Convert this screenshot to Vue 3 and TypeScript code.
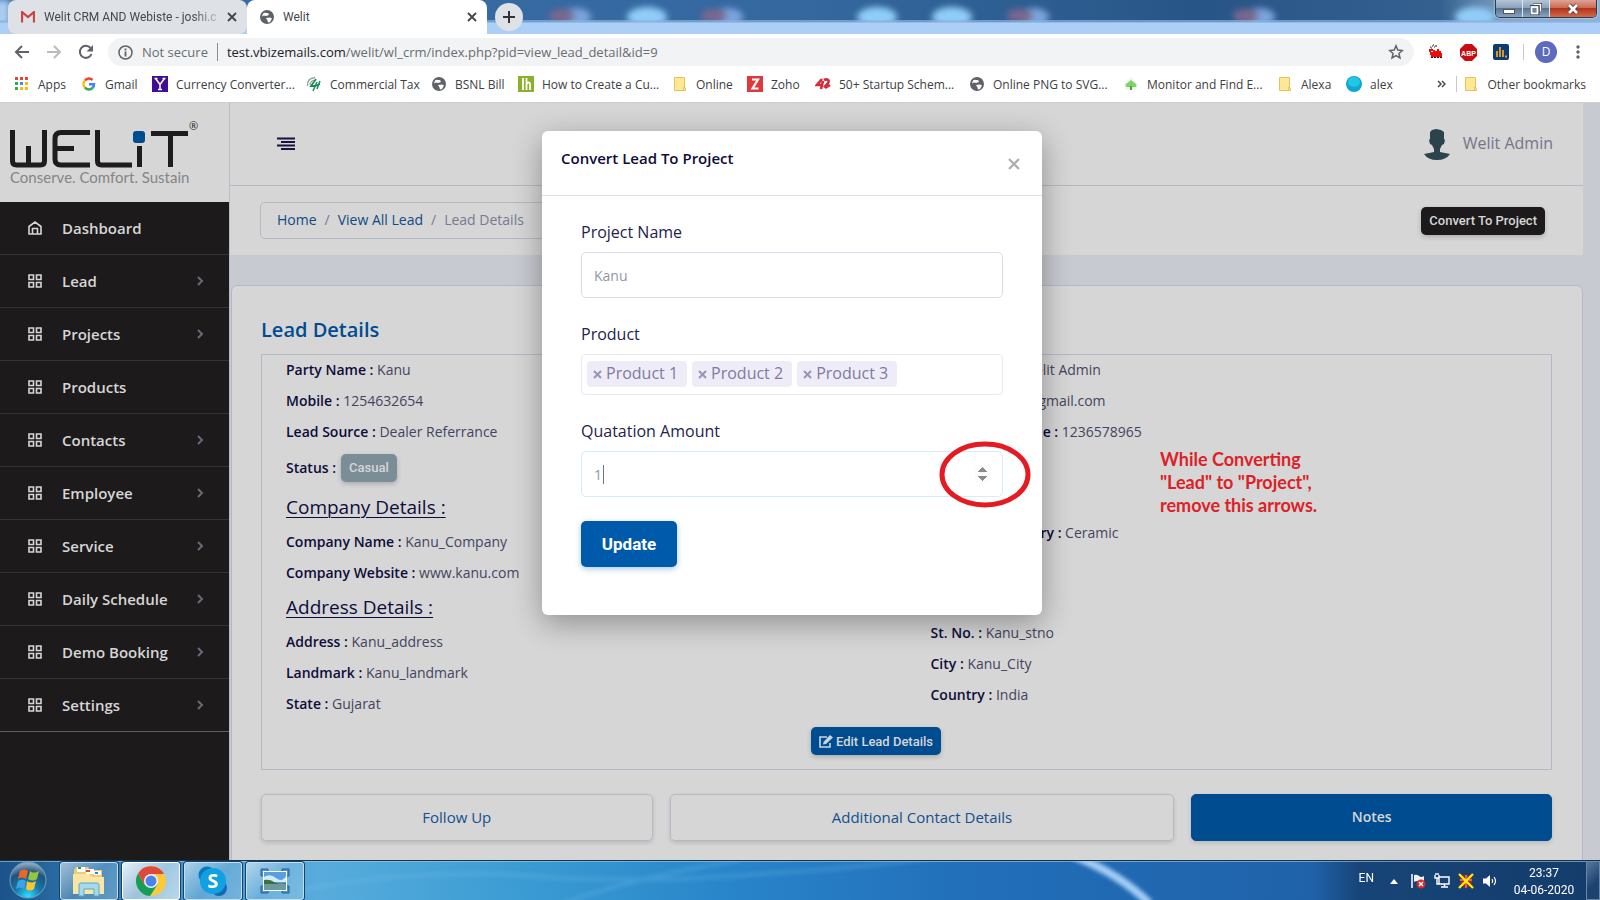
<script setup lang="ts">
import { ref } from 'vue'

interface Bookmark { icon: string; label: string; width: number }
interface Field { label: string; value: string }
interface Section { heading?: string; left: Field[]; right: Field[]; status?: string }

const bookmarks: Bookmark[] = [
  { icon: 'apps', label: 'Apps', width: 67 },
  { icon: 'google', label: 'Gmail', width: 71 },
  { icon: 'yahoo', label: 'Currency Converter...', width: 154 },
  { icon: 'tax', label: 'Commercial Tax', width: 125 },
  { icon: 'globe', label: 'BSNL Bill', width: 87 },
  { icon: 'lh', label: 'How to Create a Cu...', width: 154 },
  { icon: 'folder', label: 'Online', width: 75 },
  { icon: 'zoho', label: 'Zoho', width: 68 },
  { icon: 'fortytwo', label: '50+ Startup Schem...', width: 154 },
  { icon: 'globe', label: 'Online PNG to SVG...', width: 154 },
  { icon: 'tree', label: 'Monitor and Find E...', width: 154 },
  { icon: 'folder', label: 'Alexa', width: 69 },
  { icon: 'alex', label: 'alex', width: 60 },
]

const menu = [
  { label: 'Dashboard', icon: 'home', sub: false },
  { label: 'Lead', icon: 'grid', sub: true },
  { label: 'Projects', icon: 'grid', sub: true },
  { label: 'Products', icon: 'grid', sub: false },
  { label: 'Contacts', icon: 'grid', sub: true },
  { label: 'Employee', icon: 'grid', sub: true },
  { label: 'Service', icon: 'grid', sub: true },
  { label: 'Daily Schedule', icon: 'grid', sub: true },
  { label: 'Demo Booking', icon: 'grid', sub: true },
  { label: 'Settings', icon: 'grid', sub: true },
]

const sections: Section[] = [
  {
    left: [
      { label: 'Party Name :', value: 'Kanu' },
      { label: 'Mobile :', value: '1254632654' },
      { label: 'Lead Source :', value: 'Dealer Referrance' },
    ],
    status: 'Casual',
    right: [
      { label: 'Assigned To :', value: 'Welit Admin' },
      { label: 'Email :', value: 'welitad@gmail.com' },
      { label: 'Secondary Mobile :', value: '1236578965' },
    ],
  },
  {
    heading: 'Company Details :',
    left: [
      { label: 'Company Name :', value: 'Kanu_Company' },
      { label: 'Company Website :', value: 'www.kanu.com' },
    ],
    right: [{ label: 'Business Category :', value: 'Ceramic' }],
  },
  {
    heading: 'Address Details :',
    left: [
      { label: 'Address :', value: 'Kanu_address' },
      { label: 'Landmark :', value: 'Kanu_landmark' },
      { label: 'State :', value: 'Gujarat' },
    ],
    right: [
      { label: 'St. No. :', value: 'Kanu_stno' },
      { label: 'City :', value: 'Kanu_City' },
      { label: 'Country :', value: 'India' },
    ],
  },
]

const products = ref(['Product 1', 'Product 2', 'Product 3'])
const projectName = ref('Kanu')
const amount = ref(1)
const removeProduct = (i: number) => products.value.splice(i, 1)
const appColors = ['#ea4335', '#ea4335', '#ea4335', '#34a853', '#4285f4', '#fbbc05', '#34a853', '#fbbc05', '#fbbc05']
</script>

<template>
  <div class="desktop">
    <header class="browser">
      <div class="tabstrip">
        <svg class="aero" width="100%" height="34" aria-hidden="true">
          <defs>
            <linearGradient id="sky" x1="0" x2="1" y1="0" y2="0">
              <stop offset="0" stop-color="#3a6ca8" /><stop offset=".5" stop-color="#34689f" />
              <stop offset=".75" stop-color="#285587" /><stop offset=".9" stop-color="#33608f" />
              <stop offset=".94" stop-color="#7d9fc0" /><stop offset="1" stop-color="#8fb0d2" />
            </linearGradient>
            <filter id="soft" x="-20%" y="-60%" width="140%" height="220%"><feGaussianBlur stdDeviation="3" /></filter>
          </defs>
          <rect width="100%" height="34" fill="url(#sky)" />
          <g filter="url(#soft)">
            <rect x="-10" y="0" width="20" height="40" fill="#a9cdf0" />
            <ellipse v-for="x in [647, 877, 952, 1475]" :key="x" :cx="x" cy="17" rx="20" ry="10" fill="#8fcdf8" />
            <g v-for="x in [568, 720, 1026, 1252]" :key="x">
              <ellipse :cx="x + 8" cy="17" rx="15" ry="9" fill="#7ca4dc" />
              <ellipse :cx="x - 6" cy="16" rx="13" ry="7" fill="#79678f" />
            </g>
          </g>
          <rect y="22" width="100%" height="12" fill="#abcff6" />
          <rect y="20" width="100%" height="3" fill="#8bb3e0" opacity=".7" />
        </svg>
        <div class="tab">
          <svg width="14" height="12" viewBox="0 0 14 12"><path d="M1 11.500V1l6 5 6-5v10.500" fill="none" stroke="#c9463c" stroke-width="2.200" /></svg>
          <span class="tab-title fade">Welit CRM AND Webiste - joshi.c</span>
          <button class="x" aria-label="Close tab"><svg width="10" height="10" viewBox="0 0 10 10"><path d="M1 1l8 8M9 1l-8 8" stroke="#444" stroke-width="1.800" /></svg></button>
        </div>
        <div class="tab active">
          <svg width="14" height="14" viewBox="0 0 14 14"><circle cx="7" cy="7" r="7" fill="#5f6368" /><path d="M3 3.500c2-1.500 3 0 5-.5l1 2-3 1-2-.5-2 1zM6 8l4-.5 2 1-2 3.500-2 .5-.5-2z" fill="#fff" /></svg>
          <span class="tab-title">Welit</span>
          <button class="x" aria-label="Close tab"><svg width="10" height="10" viewBox="0 0 10 10"><path d="M1 1l8 8M9 1l-8 8" stroke="#444" stroke-width="1.800" /></svg></button>
        </div>
        <button class="newtab" aria-label="New tab"><svg width="14" height="14" viewBox="0 0 14 14"><path d="M7 1v12M1 7h12" stroke="#333" stroke-width="2" /></svg></button>
        <div class="winbtns">
          <button aria-label="Minimize"><svg width="12" height="12" viewBox="0 0 12 12"><rect x=".5" y="6.500" width="11" height="4" fill="#fff" stroke="#555" /></svg></button>
          <button aria-label="Restore"><svg width="12" height="12" viewBox="0 0 12 12"><path d="M3.500 1h7.500v7.500" fill="none" stroke="#444" stroke-width="3" /><path d="M3.500 1.500h7v7" fill="none" stroke="#fff" stroke-width="1.500" /><rect x="1" y="3.500" width="7" height="7.500" fill="none" stroke="#444" stroke-width="3" /><rect x="1.500" y="4" width="6" height="6.500" fill="#6c87a5" stroke="#fff" stroke-width="1.800" /></svg></button>
          <button class="close" aria-label="Close"><svg width="14" height="12" viewBox="0 0 14 12"><path d="M3 2l8 8M11 2l-8 8" stroke="#533" stroke-width="4.500" /><path d="M3 2l8 8M11 2l-8 8" stroke="#fff" stroke-width="2.800" /></svg></button>
        </div>
      </div>

      <div class="toolbar">
        <button class="nav" aria-label="Back"><svg width="16" height="16" viewBox="0 0 16 16"><path d="M15 8H2M8 2L2 8l6 6" fill="none" stroke="#5f6368" stroke-width="2" /></svg></button>
        <button class="nav" aria-label="Forward"><svg width="16" height="16" viewBox="0 0 16 16"><path d="M1 8h13M8 2l6 6-6 6" fill="none" stroke="#b9bbbd" stroke-width="2" /></svg></button>
        <button class="nav" aria-label="Reload"><svg width="16" height="16" viewBox="0 0 16 16"><path d="M13.500 10A6 6 0 1 1 12.500 4" fill="none" stroke="#5f6368" stroke-width="2" /><path d="M15 1v6.500H8.500z" fill="#5f6368" /></svg></button>
        <div class="omnibox">
          <svg width="15" height="15" viewBox="0 0 15 15"><circle cx="7.500" cy="7.500" r="6.500" fill="none" stroke="#5f6368" stroke-width="1.500" /><path d="M7.500 6.500v5M7.500 3.500v2" stroke="#5f6368" stroke-width="1.800" /></svg>
          <span class="secure">Not secure</span>
          <span class="url"><b>test.vbizemails.com</b>/welit/wl_crm/index.php?pid=view_lead_detail&amp;id=9</span>
          <svg width="16" height="16" viewBox="0 0 16 16"><path d="M8 1.800l1.800 4.300 4.600.4-3.500 3 1.100 4.500-4-2.400L4 14l1.100-4.500-3.500-3 4.600-.4z" fill="none" stroke="#5f6368" stroke-width="1.500" /></svg>
        </div>
        <div class="extensions">
          <svg width="16" height="16" viewBox="0 0 16 16"><path d="M1 5h4v1h2v1h2V5h2v2h2v2h1v4H3v-2H2V8H1z" fill="#f00c0c" /><path d="M3 13.500h12" stroke="#111" stroke-dasharray="2 1" /><path d="M2 3h1M4 2h1M6 3h1M7 2h2M3 4h1M5 1h1" stroke="#111" /><path d="M3 7h2v1H3z" fill="#fff" /></svg>
          <svg width="17" height="17" viewBox="0 0 17 17"><path d="M5 0h7l5 5v7l-5 5H5l-5-5V5z" fill="#c70d0d" /><text x="8.500" y="11.500" text-anchor="middle" class="abp">ABP</text></svg>
          <svg width="16" height="16" viewBox="0 0 16 16"><rect width="16" height="16" rx="2" fill="#0b3d74" /><path d="M4 13V7M7 13V3M10 13V6M12 12.500h2" stroke="#f0a020" stroke-width="1.800" /></svg>
          <i class="sep"></i>
          <span class="avatar">D</span>
          <svg width="4" height="16" viewBox="0 0 4 16" fill="#5f6368"><circle cx="2" cy="3" r="1.700" /><circle cx="2" cy="8" r="1.700" /><circle cx="2" cy="13" r="1.700" /></svg>
        </div>
      </div>

      <nav class="bookmarks" aria-label="Bookmarks">
        <a v-for="b in bookmarks" :key="b.label" href="#" class="bookmark" :style="{ width: b.width + 'px' }">
          <svg width="16" height="16" viewBox="0 0 16 16">
            <template v-if="b.icon === 'apps'"><rect v-for="(c, i) in appColors" :key="i" :x="1 + (i % 3) * 5" :y="1 + Math.floor(i / 3) * 5" width="3" height="3" :fill="c" /></template>
            <g v-else-if="b.icon === 'google'" fill="none" stroke-width="2.500"><path d="M4 4.500A5 5 0 0 1 11.500 4" stroke="#ea4335" /><path d="M4 4.500a5 5 0 0 0 0 7" stroke="#fbbc05" /><path d="M4 11.500a5 5 0 0 0 7.500.5" stroke="#34a853" /><path d="M8 8.200h5c0 1.500-.5 2.800-1.500 3.800" stroke="#4285f4" /></g>
            <g v-else-if="b.icon === 'yahoo'"><rect width="16" height="16" fill="#400c93" /><path d="M3.500 2.500L8 8.500l4.500-6M8 8v6M2.500 2.500h3M10.500 2.500h3M6 13.500h4" fill="none" stroke="#fff" stroke-width="1.500" /></g>
            <g v-else-if="b.icon === 'tax'" fill="none"><path d="M1.500 10C1 5 4 2 9 1.500M4 9c0-2.500 1.500-4 4-5" stroke="#8fa5a0" stroke-width="1.300" /><path d="M10 3L5 10h4l5-2" stroke="#17914c" stroke-width="1.800" /><path d="M11 6L7 15M14 5l-3 8" stroke="#1d8a63" stroke-width="1.500" /></g>
            <g v-else-if="b.icon === 'globe'"><circle cx="8" cy="8" r="7" fill="#5f6368" /><path d="M4 4.500c2-1.500 3 0 5-.5l1 2-3 1-2-.5-2 1zM7 9l4-.5 2 1-2 3.500-2 .5-.5-2z" fill="#fff" /></g>
            <g v-else-if="b.icon === 'lh'"><rect width="16" height="16" fill="#8cb02d" /><path d="M5 2v12M8.500 2v12M8.500 8c1-2 3.500-2 3.500 0v6" fill="none" stroke="#fff" stroke-width="1.800" /></g>
            <g v-else-if="b.icon === 'folder'"><path d="M2.500 1.500h10v10.500l1 .5v2h-11z" fill="#ffe793" stroke="#e3c35c" /><path d="M11.500 11v3.500" stroke="#e3c35c" /></g>
            <g v-else-if="b.icon === 'zoho'"><rect width="16" height="16" fill="#e0393b" /><path d="M5 3.500h6L5.500 12.500H11.500" fill="none" stroke="#fff" stroke-width="2.200" /></g>
            <g v-else-if="b.icon === 'fortytwo'" fill="none" stroke="#d8283a" stroke-width="2.600"><path d="M7 3L2 9h6M8 5l-2 8" /><path d="M9 4c3-1.500 6 0 4 3L9 11.500M10 12l5-3" /></g>
            <g v-else-if="b.icon === 'tree'"><path d="M8 1l7 7-2 6H3L1 8z" fill="#eef5ec" /><path d="M8 4l3 2.500q3.500 2 2 4.500H3q-1.500-2.500 2-4.500z" fill="#7cd46a" /><path d="M8 10v4" stroke="#52954c" stroke-width="2" /></g>
            <g v-else><circle cx="8" cy="8" r="8" fill="#13a5d4" /><ellipse cx="8" cy="6" rx="6" ry="5" fill="#20c8e6" /></g>
          </svg>
          <span>{{ b.label }}</span>
        </a>
        <span class="more"><svg width="9" height="8" viewBox="0 0 9 8"><path d="M1 1l3 3-3 3M5 1l3 3-3 3" fill="none" stroke="#4a4d51" stroke-width="1.500" /></svg></span>
        <i class="sep"></i>
        <a href="#" class="bookmark">
          <svg width="16" height="16" viewBox="0 0 16 16"><path d="M2.500 1.500h10v10.500l1 .5v2h-11z" fill="#ffe793" stroke="#e3c35c" /><path d="M11.500 11v3.500" stroke="#e3c35c" /></svg>
          <span>Other bookmarks</span>
        </a>
      </nav>
    </header>

    <main class="page">
      <aside class="sidebar">
        <svg class="logo" width="229" height="99" viewBox="0 0 229 99" role="img" aria-label="Welit">
          <g fill="none" stroke="#1f1c1d" stroke-width="5">
            <path d="M12.500 27v31q0 4 4 4h24q4 0 4-4V27M28.500 43v19" />
            <path d="M90 29.500H61q-6 0-6 6V56q0 6 6 6h29M55 45.500h19" />
            <path d="M97.500 27v31q0 4 4 4H132M139.500 43v21M151 30.500h37M170.500 31v33" />
          </g>
          <rect x="133" y="28" width="12" height="12" rx="3" fill="#004c90" />
          <text x="189" y="27" class="reg">®</text>
          <text x="10" y="80" class="tagline">Conserve. Comfort. Sustain</text>
        </svg>
        <nav class="menu">
          <a v-for="m in menu" :key="m.label" href="#">
            <svg width="14" height="14" viewBox="0 0 14 14" fill="none" stroke="#d6d6d6" stroke-width="1.600">
              <path v-if="m.icon === 'home'" d="M1 5.500L7 1l6 4.500V13H1zM4.500 13V7.500h5V13" />
              <path v-else d="M1 1h4.500v4.500H1zM8.500 1H13v4.500H8.500zM1 8.500h4.500V13H1zM8.500 8.500H13V13H8.500z" />
            </svg>
            <span>{{ m.label }}</span>
            <svg v-if="m.sub" width="7" height="10" viewBox="0 0 7 10"><path d="M1 1l4 4-4 4" fill="none" stroke="#686a76" stroke-width="2" /></svg>
          </a>
        </nav>
      </aside>

      <div class="content">
        <div class="topbar">
          <button class="burger" aria-label="Toggle menu"><svg width="18" height="14" viewBox="0 0 18 14"><path d="M0 1.500h18M4 5h14M0 8.500h18M4 12h14" stroke="#15153d" stroke-width="2" /></svg></button>
          <div class="user">
            <svg width="26" height="31" viewBox="0 0 26 31"><path d="M6 3l2-2 4-1 5 1 3 2v7l1 1-1 4-2 1-2 4v3l5 1 5 1q-4 6-13 6T0 25l5-1 5-1v-3l-2-4-2-1-1-4 1-1z" fill="#2c434b" /></svg>
            <span>Welit Admin</span>
          </div>
        </div>
        <div class="crumbbar">
          <nav class="crumbs" aria-label="Breadcrumb">
            <a href="#">Home</a><i>/</i><a href="#">View All Lead</a><i>/</i><span>Lead Details</span>
          </nav>
          <button class="btn dark">Convert To Project</button>
        </div>

        <section class="card">
          <h2>Lead Details</h2>
          <div class="details">
            <div v-for="(s, i) in sections" :key="i" class="section" :class="{ headed: s.heading }">
              <div>
                <h3 v-if="s.heading">{{ s.heading }}</h3>
                <p v-for="f in s.left" :key="f.label"><b>{{ f.label }}</b> {{ f.value }}</p>
                <div v-if="s.status" class="status"><b>Status :</b><button class="btn grey">{{ s.status }}</button></div>
              </div>
              <div class="right">
                <p v-for="f in s.right" :key="f.label"><b>{{ f.label }}</b> {{ f.value }}</p>
              </div>
            </div>
            <div class="actions">
              <button class="btn blue">
                <svg width="14" height="13" viewBox="0 0 14 13"><path d="M8 2H1v10h10V8" fill="none" stroke="#c9d6e2" stroke-width="1.600" /><path d="M4 9.500L4.500 7l6.500-7 3 2.500L7 9z" fill="#c9d6e2" /></svg>
                Edit Lead Details
              </button>
            </div>
          </div>
          <div class="tabs">
            <button>Follow Up</button>
            <button>Additional Contact Details</button>
            <button class="on">Notes</button>
          </div>
        </section>
      </div>

      <div class="overlay">
        <form class="modal" role="dialog" aria-label="Convert Lead To Project" @submit.prevent>
          <header>
            <h1>Convert Lead To Project</h1>
            <button type="button" class="dismiss" aria-label="Close"><svg width="12" height="12" viewBox="0 0 12 12"><path d="M1 1l10 10M11 1L1 11" stroke="#b0b0b0" stroke-width="2.400" /></svg></button>
          </header>
          <div class="fields">
            <label for="pname">Project Name</label>
            <input id="pname" v-model="projectName" type="text" />
            <span id="plabel" class="label">Product</span>
            <div class="tags" role="group" aria-labelledby="plabel">
              <span v-for="(p, i) in products" :key="p" class="tag">
                <button type="button" :aria-label="'Remove ' + p" @click="removeProduct(i)"><svg width="9" height="9" viewBox="0 0 9 9"><path d="M1 1l7 7M8 1L1 8" stroke="#9a94b8" stroke-width="2" /></svg></button>{{ p }}
              </span>
            </div>
            <label for="amount">Quatation Amount</label>
            <div class="amount">
              <input id="amount" v-model="amount" type="number" />
              <i class="caret"></i>
              <svg class="ring" width="92" height="67" viewBox="0 0 92 67"><ellipse cx="46" cy="33.500" rx="43" ry="30.500" fill="none" stroke="#e41b23" stroke-width="5" /></svg>
            </div>
            <button class="update">Update</button>
          </div>
        </form>
      </div>
      <p class="note">While Converting<br />"Lead" to "Project",<br />remove this arrows.</p>
    </main>

    <footer class="taskbar">
      <svg class="wave" width="100%" height="40" viewBox="0 0 1600 40" preserveAspectRatio="none" aria-hidden="true">
        <defs>
          <linearGradient id="bar" x1="0" x2="1" y1="0" y2="0">
            <stop offset="0" stop-color="#1b5289" /><stop offset=".05" stop-color="#2c74ab" /><stop offset=".11" stop-color="#4293c9" />
            <stop offset=".2" stop-color="#57acdc" /><stop offset=".33" stop-color="#3a9bd3" /><stop offset=".45" stop-color="#2986ca" />
            <stop offset=".6" stop-color="#226fba" /><stop offset=".82" stop-color="#1f62a9" /><stop offset=".85" stop-color="#174477" />
            <stop offset="1" stop-color="#143c6b" />
          </linearGradient>
          <filter id="glow" x="-20%" y="-20%" width="140%" height="140%"><feGaussianBlur stdDeviation="2" /></filter>
        </defs>
        <rect width="1600" height="40" fill="url(#bar)" />
        <g fill="none" filter="url(#glow)">
          <path d="M300 30Q420 8 530 16T760 14Q860 8 930 -2M560 44Q640 16 740 0" stroke="#7cc2ea" stroke-width="4" opacity=".25" />
          <path d="M1074 -4Q1120 14 1150 44" stroke="#a4cff8" stroke-width="8" />
        </g>
        <path d="M0 .5h1600" stroke="#17324d" /><path d="M0 1.500h1600" stroke="#a5cde0" opacity=".6" />
      </svg>
      <button class="start" aria-label="Start">
        <svg width="38" height="38" viewBox="0 0 38 38">
          <defs><radialGradient id="orb" cx=".5" cy=".95" r=".9"><stop offset="0" stop-color="#2fe0ff" /><stop offset=".4" stop-color="#1679ad" /><stop offset=".75" stop-color="#21527c" /><stop offset="1" stop-color="#8ba6bb" /></radialGradient></defs>
          <circle cx="19" cy="19" r="18" fill="url(#orb)" stroke="#6fa3c8" />
          <path d="M11 10q4-3 8 0l-2 8q-4-3-8 0z" fill="#ee6626" /><path d="M21 10q4 3 9 0l-2 8q-4 3-9 0z" fill="#93c742" />
          <path d="M9 20q4-3 8 0l-2 8q-4-3-8 0z" fill="#39a5e8" /><path d="M18 20q4 3 9 0l-2 8q-4 3-8 0z" fill="#fcc72c" />
        </svg>
      </button>
      <button class="task" aria-label="Explorer">
        <svg width="34" height="32" viewBox="0 0 34 32"><path d="M2 5l2-3h12l2 3h12v24H2z" fill="#e9cd7a" /><path d="M5 2h8v5H5zM14 4h8v5h-8zM22 6h7v4h-7z" fill="#fff" /><path d="M6 2h3v2H6z" fill="#2ca52c" /><path d="M14 5h4v2h-4z" fill="#d0532c" /><path d="M23 7h3v2h-3z" fill="#2987cc" /><path d="M1 9h16l3 3h12v17H1z" fill="#f8e6a2" /><path d="M7 31V20q0-2 2-2h16q2 0 2 2v11h-5v-7H12v7z" fill="#a5d9ee" stroke="#5fa5c4" /></svg>
      </button>
      <button class="task lit" aria-label="Chrome">
        <svg width="30" height="30" viewBox="0 0 30 30"><circle cx="15" cy="15" r="15" fill="#fbc93a" /><path d="M2 7.500A15 15 0 0 0 14 30l7.500-11.500L15 15l-6.500 3.500z" fill="#189d58" /><path d="M2 7.500L8.500 18.500 15 8h13A15 15 0 0 0 2 7.500z" fill="#db4a3c" /><circle cx="15" cy="15" r="7" fill="#f4f4f4" /><circle cx="15" cy="15" r="5.500" fill="#4a83ee" /></svg>
      </button>
      <button class="task" aria-label="Skype">
        <svg width="30" height="30" viewBox="0 0 30 30"><circle cx="9" cy="9" r="8.500" fill="#0a78c0" /><circle cx="21" cy="22" r="8" fill="#1468b4" /><circle cx="15" cy="15" r="13" fill="#11a0e0" /><text x="15" y="22" text-anchor="middle" class="skype">S</text></svg>
      </button>
      <button class="task" aria-label="Picture viewer">
        <svg width="30" height="26" viewBox="0 0 30 26"><path d="M1 1h7v7H1zM22 1h7v7h-7zM1 18h7v7H1zM22 18h7v7h-7z" fill="#4d8fcb" stroke="#255f9d" /><rect x="3" y="3" width="24" height="20" fill="#fff" /><rect x="4" y="4" width="22" height="18" fill="#5b9ee0" /><path d="M4 9q6-4 12 1t10-2v6H4z" fill="#d5eaf7" /><path d="M4 12q6-1 10 2t12 1v2H4z" fill="#3b713f" /><path d="M4 16h22v6H4z" fill="#6d9a9c" /></svg>
      </button>
      <div class="tray">
        <span class="lang">EN</span>
        <svg class="expand" width="8" height="5" viewBox="0 0 8 5"><path d="M0 5l4-5 4 5z" fill="#fff" /></svg>
        <svg width="16" height="16" viewBox="0 0 16 16"><path d="M2 1v14" stroke="#fff" stroke-width="1.500" /><path d="M4 2q3-1 5 1t5 0v6q-3 2-5 0T4 9z" fill="#eef1f5" /><circle cx="11" cy="11" r="4.500" fill="#d52b2b" /><path d="M9 9l4 4M13 9l-4 4" stroke="#fff" stroke-width="1.300" /></svg>
        <svg width="16" height="16" viewBox="0 0 16 16" fill="none" stroke="#fff" stroke-width="1.400"><path d="M5 4h10v7H5zM7 14h7M10.500 11v3M1 2v3h4V2M3 5v6h2M2 0v2M4 0v2" /></svg>
        <svg width="16" height="16" viewBox="0 0 16 16"><path d="M2 2h12v8q-2 4-6 5-4-1-6-5z" fill="#a52224" /><path d="M8 2v13M2 7h12" stroke="#d9b9b9" /><path d="M1 1l14 14M15 1L1 15" stroke="#ffee00" stroke-width="2.300" /></svg>
        <svg width="16" height="16" viewBox="0 0 16 16"><path d="M1 5.500h3L8 2v12L4 10.500H1z" fill="#fff" /><path d="M10 6q1.500 2 0 4M12 4q3 4 0 8" fill="none" stroke="#fff" stroke-width="1.200" /></svg>
        <div class="clock"><span>23:37</span><span>04-06-2020</span></div>
        <button class="peek" aria-label="Show desktop"></button>
      </div>
    </footer>
  </div>
</template>

<style>
html, body { margin: 0; overflow: hidden; }
</style>

<style scoped>
* { box-sizing: border-box; }
button { font: inherit; border: 0; background: none; padding: 0; color: inherit; display: flex; align-items: center; justify-content: center; }
a { color: inherit; text-decoration: none; }
h1, h2, h3, p { margin: 0; }
svg { flex: none; display: block; }
.desktop { height: 100vh; display: flex; flex-direction: column; font-family: "Open Sans", "Noto Sans", sans-serif; overflow: hidden; }

.browser { flex: none; background: #fff; border-bottom: 1px solid #cfcfd0; }
.tabstrip { position: relative; height: 34px; display: flex; padding-left: 8px; font: 12px Roboto, sans-serif; color: #45484c; }
.aero { position: absolute; inset: 0; }
.tab { position: relative; width: 239px; display: flex; align-items: center; gap: 9px; padding: 0 10px 0 13px; background: #dee1e6; border-radius: 8px; }
.tab.active { width: 240px; background: #fff; border-radius: 8px 8px 0 0; }
.tab-title { flex: 1; white-space: nowrap; overflow: hidden; }
.fade { mask-image: linear-gradient(90deg, #000 85%, #0003); }
.newtab { position: relative; width: 28px; height: 28px; margin: 3px 0 0 8px; border-radius: 50%; background: #dee1e6; }
.winbtns { position: relative; margin: 0 3px 0 auto; height: 18px; display: flex; border: 1px solid #263c55; border-top: 0; border-radius: 0 0 5px 5px; overflow: hidden; box-shadow: 0 0 2px #fff; }
.winbtns button { width: 27px; background: linear-gradient(#b4c6d8, #8ba2ba 45%, #5a7593 50%, #8aa4c0); border-right: 1px solid #dbe5ee; }
.winbtns .close { width: 46px; border: 0; background: linear-gradient(#dda394, #cb6c55 45%, #b3331d 50%, #d36a4a); }

.toolbar { height: 36px; display: flex; align-items: center; padding: 0 20px 0 14px; }
.nav { width: 16px; margin-right: 16px; }
.omnibox { flex: 1; height: 28px; margin-left: -2px; border-radius: 14px; background: #f1f3f4; display: flex; align-items: center; padding: 0 10px; font-size: 13px; color: #6a6d71; }
.secure { margin: 0 9px; padding-right: 9px; line-height: 18px; border-right: 1px solid #8a8d91; white-space: nowrap; }
.url { flex: 1; white-space: nowrap; overflow: hidden; }
.url b { font-weight: 400; color: #202124; }
.extensions { display: flex; align-items: center; gap: 16px; padding-left: 14px; }
.sep { width: 1px; height: 16px; background: #c6c8cb; }
.extensions .sep { margin: 0 -5px 0 -2px; }
.avatar { width: 22px; height: 22px; border-radius: 50%; background: #5c6bc0; color: #fff; font-size: 12px; line-height: 22px; text-align: center; }
.extensions .avatar + svg { margin-left: 3px; }
.abp { font: bold 7px "Liberation Sans", sans-serif; fill: #fff; }

.bookmarks { height: 32px; padding: 0 14px 4px; display: flex; align-items: center; font-size: 12px; color: #3c4043; }
.bookmark { flex: none; display: flex; align-items: center; gap: 8px; white-space: nowrap; }
.more { margin: 0 10px 0 auto; }
.bookmarks .sep { margin-right: 6px; }

.page { flex: 1; min-height: 0; position: relative; display: flex; background: #c8cad1; overflow: hidden; }
.sidebar { width: 229px; flex: none; background: #1c1a1b; }
.logo { background: #d6d6d6; }
.reg { font-size: 11px; fill: #1f1c1d; }
.tagline { font: 15px Lato, sans-serif; fill: #858585; }
.menu a { height: 53px; display: flex; align-items: center; padding: 0 25px 0 28px; border-bottom: 1px solid #353435; color: #d6d6d6; font-size: 15px; font-weight: 600; }
.menu a:last-child { border-color: #606060; }
.menu span { flex: 1; margin-left: 20px; }

.content { flex: 1; min-width: 0; margin-right: 17px; border-left: 1px solid #b9bcc7; color: #0d0d3a; }
.topbar, .crumbbar { display: flex; align-items: center; justify-content: space-between; background: #d6d6d6; }
.topbar { height: 83px; padding: 0 30px 0 47px; border-bottom: 1px solid #b5b9c6; }
.user { display: flex; align-items: center; gap: 13px; color: #74748a; font-size: 16px; line-height: 20px; }
.user span { padding-bottom: 2px; }
.crumbbar { height: 69px; padding: 0 38px 0 30px; }
.crumbs { width: 320px; height: 37px; display: flex; align-items: center; gap: 8px; padding: 0 16px 3px; border: 1px solid #b5b9c6; border-radius: 5px; font-size: 14px; color: #0f4a82; white-space: nowrap; }
.crumbs i, .crumbs span { font-style: normal; color: #777a90; }
.btn { height: 28px; padding: 0 8px; border-radius: 5px; font: 500 13px Roboto, sans-serif; box-shadow: 0 2px 5px #0003; color: #d6d6d6; }
.dark { background: #1c1a1b; }
.grey { background: #7b8d96; }
.blue { background: #004c90; gap: 3px; }

.card { margin: 30px 0 0 1px; height: 700px; padding: 29px 30px 0 29px; background: #d6d6d6; border: 1px solid #b5b9c6; border-radius: 6px; }
h2 { font-size: 20px; line-height: 30px; font-weight: 600; color: #004c90; }
.details { margin-top: 9px; border: 1px solid #b5b9c6; padding-bottom: 14px; }
.section { display: grid; grid-template-columns: 1fr 1fr; }
.section > div { padding-left: 24px; }
.section:first-child { margin-top: -1px; }
.headed .right { padding-top: 29px; }
.section p { font-size: 14px; line-height: 31px; color: #44445f; white-space: nowrap; }
.section b { font-weight: 600; color: #0d0d3a; }
.status { display: flex; height: 41px; align-items: center; gap: 5px; font-size: 14px; }
h3 { font-size: 19px; line-height: 38px; font-weight: 500; text-decoration: underline; text-underline-offset: 3px; text-decoration-thickness: 1px; }
.actions { display: flex; justify-content: center; padding: 8px 61px 0 0; }
.tabs { display: grid; grid-template-columns: 391fr 504fr 360fr; gap: 17px; margin-top: 24px; }
.tabs button { height: 47px; border: 1px solid #b5b9c6; border-radius: 5px; color: #14508c; font-size: 15px; padding-bottom: 2px; box-shadow: 0 2px 4px #0002; }
.tabs .on { background: #004c90; border-color: #004c90; color: #d6d6d6; font-size: 14px; font-weight: 600; }

.overlay { position: absolute; inset: 0 16px 0 0; display: flex; justify-content: center; align-items: flex-start; padding-top: 28px; }
.modal { width: 500px; background: #fff; border-radius: 6px; box-shadow: 0 8px 30px #0005; color: #23234b; }
.modal header { display: flex; justify-content: space-between; height: 65px; padding: 17px 22px 0 19px; border-bottom: 1px solid #dcdce8; }
h1 { font-size: 15px; line-height: 20px; font-weight: 600; color: #0d0d3a; }
.dismiss { height: 32px; }
.fields { padding: 24px 39px 48px; display: flex; flex-direction: column; }
.fields label, .label { font-size: 16px; line-height: 24px; margin-bottom: 8px; }
.fields input { width: 100%; height: 46px; margin: 0 0 24px; padding: 0 12px; border: 1px solid #dadbe8; border-radius: 5px; background: #fff; font: 14px "Open Sans", sans-serif; color: #8e98aa; outline: 0; }
.tags { height: 41px; margin-bottom: 24px; padding: 6px 5px; display: flex; align-items: flex-start; gap: 5px; border: 1px solid #e9e9f3; border-radius: 4px; }
.tag { height: 26px; padding: 0 9px 2px 6px; display: flex; align-items: center; gap: 4px; border-radius: 4px; background: #eeecf7; color: #7e7aa5; font-size: 16px; white-space: nowrap; }
.tag button { padding-top: 3px; }
.amount { position: relative; }
.amount input { border-color: #d3eef5; display: block; }
.amount input::-webkit-inner-spin-button { opacity: 1; }
.caret { position: absolute; left: 22px; top: 14px; width: 1px; height: 19px; background: #6d7489; }
.ring { position: absolute; right: -28px; top: -10px; }
.update { width: 96px; height: 46px; border-radius: 5px; background: #005aab; color: #fff; font: bold 17px Roboto, sans-serif; box-shadow: 0 2px 6px #a9cbe8; }
.note { position: absolute; left: 1160px; top: 345px; font: bold 18px/23px Lato, sans-serif; color: #dc2228; white-space: nowrap; }

.taskbar { position: relative; height: 40px; flex: none; display: flex; align-items: center; gap: 4px; color: #fff; }
.wave { position: absolute; inset: 0; }
.start { position: relative; width: 56px; }
.task { position: relative; width: 58px; height: 38px; margin-top: 2px; border: 1px solid #c4e0f0; border-radius: 3px; background: linear-gradient(135deg, #ffffff90, #ffffff28 50%, #ffffff38); box-shadow: 0 0 0 1px #17406a; }
.lit { background: linear-gradient(135deg, #ffffffe0, #ffffff80 50%, #ffffffa0); border-color: #fff; }
.tray { position: relative; margin-left: auto; height: 100%; display: flex; align-items: center; gap: 8px; font: 12px Roboto, sans-serif; }
.tray > svg { margin-top: 2px; }
.tray .expand { margin-right: 4px; }
.lang { margin: 0 8px 4px 0; }
.clock { width: 76px; padding-top: 3px; display: flex; flex-direction: column; align-items: center; line-height: 17px; }
.peek { width: 14px; height: 39px; margin-left: -4px; align-self: flex-end; border: 1px solid #6687a8; background: linear-gradient(135deg, #57799d, #1c426f 60%); }
.skype { font: bold 20px "Open Sans", sans-serif; fill: #fff; }
</style>
